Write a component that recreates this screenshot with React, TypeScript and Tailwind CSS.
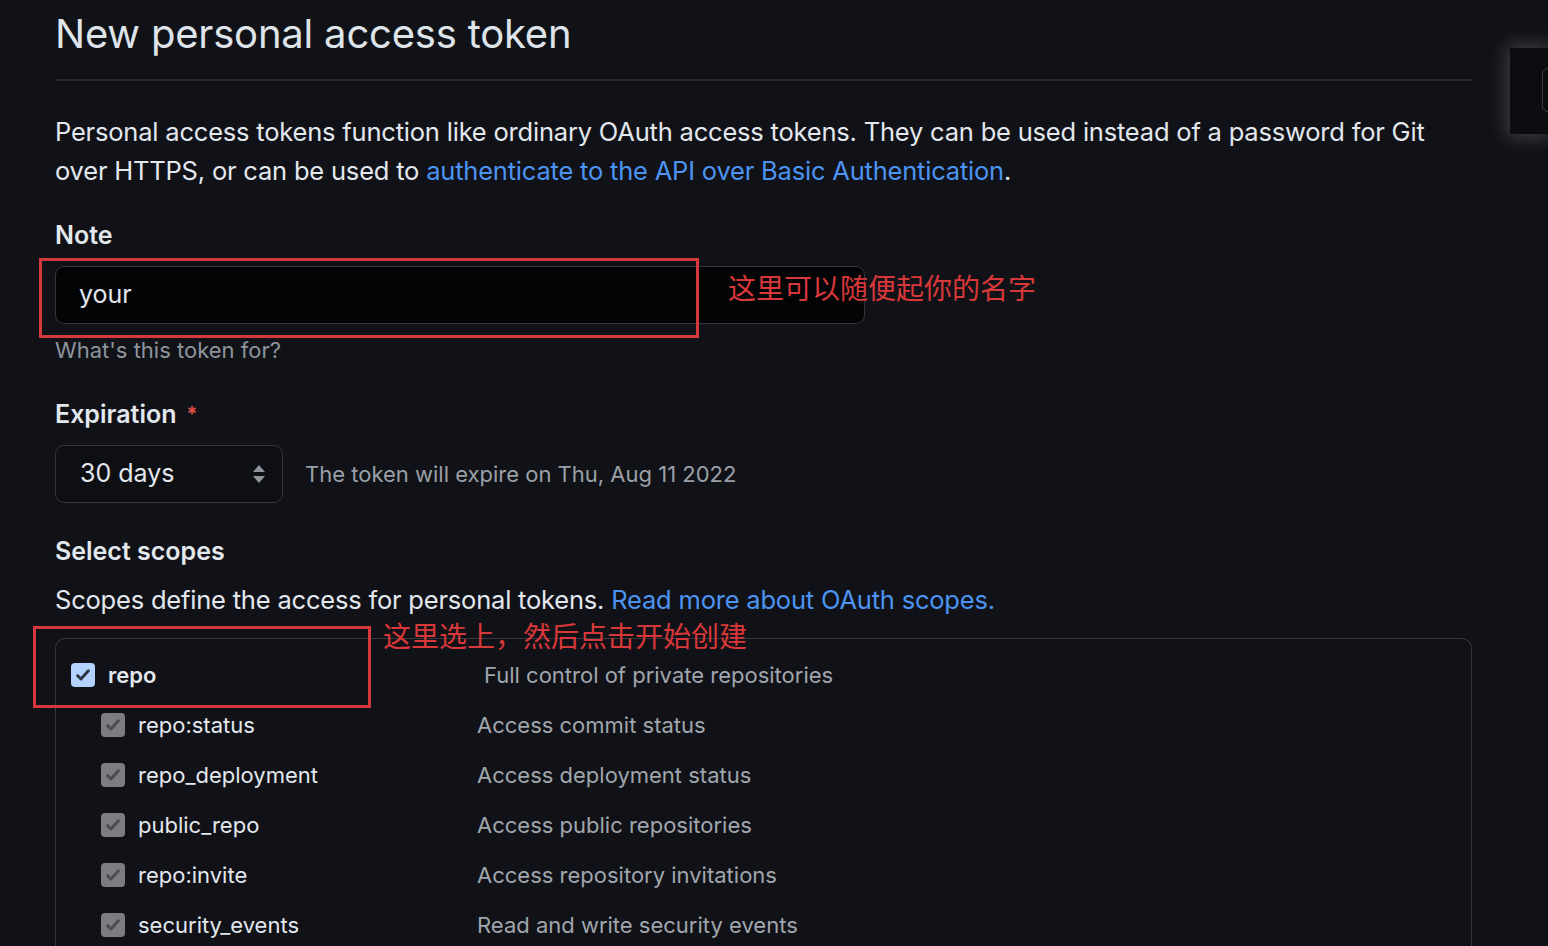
import React from "react";

type Scope = {
  name: string;
  desc: string;
};

const subScopes: Scope[] = [
  { name: "repo:status", desc: "Access commit status" },
  { name: "repo_deployment", desc: "Access deployment status" },
  { name: "public_repo", desc: "Access public repositories" },
  { name: "repo:invite", desc: "Access repository invitations" },
  { name: "security_events", desc: "Read and write security events" },
];

function Check({ muted }: { muted?: boolean }) {
  return (
    <span
      className={
        muted
          ? "flex h-[24px] w-[24px] shrink-0 items-center justify-center rounded-[4px] bg-[#7b7d80]"
          : "flex h-[24px] w-[24px] shrink-0 items-center justify-center rounded-[4px] bg-[#b4d2ff]"
      }
    >
      <svg width="18" height="18" viewBox="0 0 16 16" fill="none">
        <path
          d="M3.2 8.6l3 3L12.8 4.2"
          stroke={muted ? "#4a4c50" : "#2e3540"}
          strokeWidth="2.6"
          strokeLinecap="round"
          strokeLinejoin="round"
        />
      </svg>
    </span>
  );
}

export default function App() {
  return (
    <div className="relative h-[946px] overflow-hidden bg-[#111217] font-['Inter','Noto_Sans_CJK_SC',sans-serif] text-[#e3e8ee]">
      {/* right edge panel with glow */}
      <div className="absolute right-0 top-[48px] h-[86px] w-[38px] bg-[#0c0d11] shadow-[0_0_18px_4px_rgba(255,255,255,0.18)]">
        <div className="ml-[32px] mt-[20px] h-[44px] w-[12px] rounded-l-[6px] border border-[#3a3d43]" />
      </div>

      <div className="w-[1472px] pl-[55px]">
        <h1 className="pt-[8px] text-[40px] font-normal leading-[52px] tracking-[-0.2px] text-[#dfe4ea]">
          New personal access token
        </h1>
        <div className="mt-[19px] h-[2px] bg-[#25282e]" />

        <p className="mt-[31px] text-[25.5px] leading-[39px] tracking-[-0.2px]">
          Personal access tokens function like ordinary OAuth access tokens. They can be used instead of a password for Git
          <br />
          over HTTPS, or can be used to <span className="text-[#4c94f2]">authenticate to the API over Basic Authentication</span>.
        </p>

        {/* Note */}
        <div className="mt-[28px] text-[25px] font-semibold leading-[34px]">Note</div>
        <div className="relative mt-[14px]">
          <div className="flex h-[58px] w-[810px] items-center rounded-[9px] border border-[#33363c] bg-[#030406] pl-[23px] text-[25px]">
            your
          </div>
          <div className="absolute left-[-16px] top-[-8px] h-[80px] w-[660px] border-[3px] border-[#d6393b]" />
          <div className="absolute left-[673px] top-[5px] text-[28px] leading-[36px] text-[#d9383a]">
            这里可以随便起你的名字
          </div>
        </div>
        <div className="mt-[11px] text-[22px] leading-[30px] text-[#8d949c]">What's this token for?</div>

        {/* Expiration */}
        <div className="mt-[32px] flex items-center gap-[10px] text-[25px] font-semibold leading-[34px]">
          Expiration <span className="text-[20px] text-[#e5534b]">*</span>
        </div>
        <div className="mt-[14px] flex items-center gap-[22px]">
          <div className="flex h-[58px] w-[228px] items-center justify-between rounded-[9px] border border-[#33363c] bg-[#0e0f13] pl-[24px] pr-[16px] text-[25px]">
            <span>30 days</span>
            <svg width="14" height="22" viewBox="0 0 14 22">
              <path d="M7 2l6 7H1z" fill="#8f959c" />
              <path d="M7 20l6-7H1z" fill="#8f959c" />
            </svg>
          </div>
          <span className="text-[22px] text-[#9aa0a7]">The token will expire on Thu, Aug 11 2022</span>
        </div>

        {/* Scopes */}
        <div className="mt-[31px] text-[25px] font-semibold leading-[34px]">Select scopes</div>
        <p className="mt-[15px] text-[25.5px] leading-[34px] tracking-[-0.2px]">
          Scopes define the access for personal tokens. <span className="text-[#4c94f2]">Read more about OAuth scopes.</span>
        </p>

        <div className="relative mt-[21px] h-[400px] rounded-t-[10px] border border-b-0 border-[#34373d] pl-[15px] pt-[20px]">
          <div className="absolute left-[-23px] top-[-13px] h-[82px] w-[338px] border-[3px] border-[#d6393b]" />
          <div className="absolute left-[327px] top-[-20px] text-[28px] leading-[36px] text-[#d9383a]">
            这里选上，然后点击开始创建
          </div>

          <div className="flex h-[32px] items-center">
            <div className="flex w-[413px] items-center gap-[13px]">
              <Check />
              <span className="text-[22px] font-semibold">repo</span>
            </div>
            <span className="text-[22px] text-[#a0a6ad]">Full control of private repositories</span>
          </div>

          <div className="mt-[18px] flex flex-col gap-[18px] pl-[30px]">
            {subScopes.map((s) => (
              <div key={s.name} className="flex h-[32px] items-center">
                <div className="flex w-[376px] items-center gap-[13px]">
                  <Check muted />
                  <span className="text-[22px]">{s.name}</span>
                </div>
                <span className="text-[22px] text-[#a0a6ad]">{s.desc}</span>
              </div>
            ))}
          </div>
        </div>
      </div>
    </div>
  );
}
